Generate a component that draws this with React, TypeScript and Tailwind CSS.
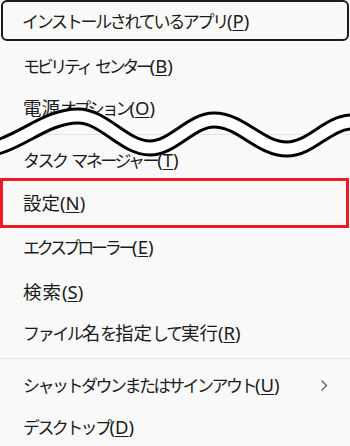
import React from "react";

type Item = { t: string; k: string; h: string; kana: string; kanji?: string; chevron?: boolean; red?: boolean };

const LATIN = "text-[18.5px] font-['Noto_Sans','Open_Sans',sans-serif]";

function JP({ text, kana, kanji }: { text: string; kana: string; kanji: string }) {
  const runs: { type: string; s: string }[] = [];
  for (const c of Array.from(text)) {
    const type = /[\u4e00-\u9fff]/.test(c) ? "k" : c === " " ? "s" : "h";
    const last = runs[runs.length - 1];
    if (last && last.type === type) last.s += c;
    else runs.push({ type, s: c });
  }
  return (
    <>
      {runs.map((r, i) => (
        <span key={i} className={r.type === "k" ? kanji : r.type === "s" ? LATIN : kana}>
          {r.type === "s" ? "\u00a0" : r.s}
        </span>
      ))}
    </>
  );
}

function Label({ item }: { item: Item }) {
  return (
    <span className="whitespace-nowrap">
      <JP text={item.t} kana={item.kana} kanji={item.kanji ?? "text-[18.5px]"} />
      <span className={LATIN}>
        (<span className="underline decoration-1 underline-offset-[2px]">{item.k}</span>)
      </span>
    </span>
  );
}

function Row({ item }: { item: Item }) {
  return (
    <div className={`relative flex items-center pl-[23px] pr-[22px] ${item.h}`}>
      <Label item={item} />
      {item.chevron && (
        <svg className="ml-auto" width="8" height="13" viewBox="0 0 8 13">
          <polyline points="1.5,1.5 6.5,6.5 1.5,11.5" fill="none" stroke="#606060" strokeWidth="1.3" />
        </svg>
      )}
      {item.red && (
        <div className="absolute left-0 right-[1px] -top-[3px] -bottom-[3px] border-[3px] border-[#ed1c24]" />
      )}
    </div>
  );
}

function Sep({ h }: { h: string }) {
  return (
    <div className={`flex items-center ${h}`}>
      <div className="h-px w-full ml-[1px] bg-[#e3e3e3]" />
    </div>
  );
}

export default function App() {
  const first: Item = { t: "インストールされているアプリ", k: "P", h: "", kana: "text-[17px] tracking-[-2.3px]" };
  const group1: Item[] = [
    { t: "モビリティ センター", k: "B", h: "h-[44px]", kana: "text-[17px] tracking-[-3.35px]" },
    { t: "電源オプション", k: "O", h: "h-[40px]", kana: "text-[17px] tracking-[-3.1px]" },
  ];
  const group2: Item[] = [
    { t: "タスク マネージャー", k: "T", h: "h-[41px]", kana: "text-[17px] tracking-[-2.5px]" },
    { t: "設定", k: "N", h: "h-[44px]", kana: "text-[17px]", red: true },
    { t: "エクスプローラー", k: "E", h: "h-[45px]", kana: "text-[17px] tracking-[-3.3px]" },
    { t: "検索", k: "S", h: "h-[43px]", kana: "text-[17px]", kanji: "text-[18.5px] tracking-[1px]" },
    { t: "ファイル名を指定して実行", k: "R", h: "h-[40px]", kana: "text-[17px] tracking-[-2.3px]" },
  ];
  const group3: Item[] = [
    { t: "シャットダウンまたはサインアウト", k: "U", h: "h-[44px]", kana: "text-[17px] tracking-[-2.5px]", chevron: true },
    { t: "デスクトップ", k: "D", h: "h-[40px]", kana: "text-[17px] tracking-[-2.6px]" },
  ];

  const wave =
    "M -80 118 C -55 118, -50 150, -22 150 C 15 150, 42 116, 78 116 C 104 116, 124 148, 150 148 C 173 148, 191 120, 214 120 C 241 120, 260 149, 287 149 C 311 149, 328 122, 352 122 C 376 122, 390 140, 400 145";

  return (
    <div className="relative w-[350px] h-[446px] overflow-hidden bg-[#f9f9f9] text-[#1b1b1b] leading-none font-['Noto_Sans_CJK_JP','Noto_Sans',sans-serif]">
      <div className="h-[44px]">
        <div className="ml-[1px] w-[348px] h-[41px] border-2 border-[#1b1b1b] rounded-[6px] flex items-center pl-[19px] pt-[1px]">
          <Label item={first} />
        </div>
      </div>
      {group1.map((it) => (
        <Row key={it.k} item={it} />
      ))}
      <Sep h="h-[12px]" />
      {group2.map((it) => (
        <Row key={it.k} item={it} />
      ))}
      <Sep h="h-[10px]" />
      {group3.map((it) => (
        <Row key={it.k} item={it} />
      ))}
      <svg className="absolute left-0 top-0 pointer-events-none" width="350" height="446" viewBox="0 0 350 446">
        <path d={wave} fill="none" stroke="#000" strokeWidth="17" />
        <path d={wave} fill="none" stroke="#fff" strokeWidth="11" />
      </svg>
    </div>
  );
}
